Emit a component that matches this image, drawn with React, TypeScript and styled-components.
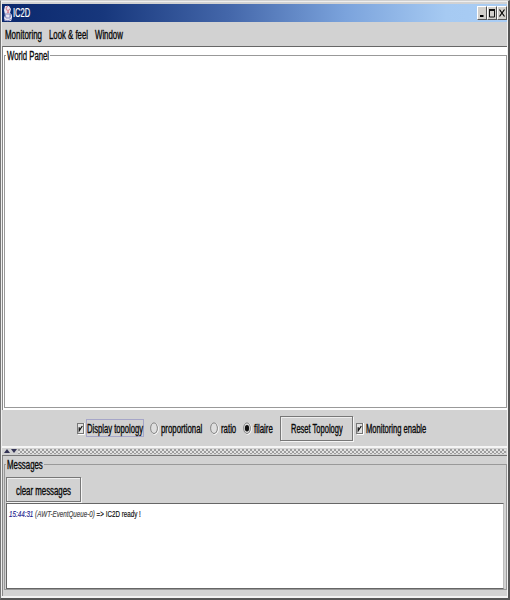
import React, { useLayoutEffect, useRef, useState } from "react";
import styled, { createGlobalStyle } from "styled-components";

const Global = createGlobalStyle`
  * { box-sizing: border-box; }
  body { margin: 0; background: #d2d2d2; font-family: "Liberation Sans", Arial, sans-serif; }
`;

const Frame = styled.div`
  width: 510px;
  height: 600px;
  display: flex;
  flex-direction: column;
  background: #d2d2d2;
  border-style: solid;
  border-width: 1px 2px 2px 1px;
  border-color: #d0d0d0 #555 #555 #777;
  box-shadow: inset 1px 1px 0 #eee, inset -1px -2px 0 #f2f2f2;
  padding: 3px 1px 2px 1px;
  color: #080808;
`;

const TitleBar = styled.header`
  height: 18px;
  flex: none;
  display: flex;
  align-items: center;
  padding: 0 0 0 1px;
  background: linear-gradient(90deg, #0b286d 0%, #17377c 20%, #4467aa 45%, #7ba3dc 68%, #a6caf2 88%, #a9cdf5 100%);
  color: #fff;
`;
const WindowButtons = styled.div`
  display: flex;
  margin-left: auto;
`;
const WindowButton = styled.button`
  width: 10px;
  height: 14px;
  padding: 0;
  border: 1px solid;
  border-color: #fff #555 #555 #fff;
  background: #d2d0cc;
  display: flex;
  svg { display: block; }
`;
const MenuBar = styled.nav`
  height: 24px;
  flex: none;
  display: flex;
  align-items: center;
  gap: 7px;
  padding: 1px 0 0 3px;
`;
const World = styled.section`
  height: 364px;
  flex: none;
  background: #fff;
  border-top: 1px solid #666;
  border-left: 1px solid #888;
  padding: 0 0 2px 1px;
`;
const Titled = styled.fieldset<{ $h: number }>`
  height: ${(p) => p.$h}px;
  min-width: 0;
  margin: 0;
  padding: 0;
  border: 1px solid #999;
  legend {
    display: flex;
    height: 17px;
    align-items: center;
    margin: 0 0 0 1px;
    padding: 0 1px;
  }
`;
const Controls = styled.div`
  height: 36px;
  flex: none;
  display: flex;
  align-items: center;
  padding-left: 75px;
`;
const Option = styled.label<{ $gap: number; $lead?: number }>`
  display: flex;
  align-items: center;
  height: 18px;
  margin-left: ${(p) => p.$lead ?? 0}px;
  margin-right: ${(p) => p.$gap}px;
`;
const Caption = styled.span<{ $focus?: boolean }>`
  display: flex;
  align-items: center;
  height: 18px;
  margin-left: 1px;
  padding-top: 1px;
  border: 1px solid ${(p) => (p.$focus ? "#a6a6c8" : "transparent")};
`;
const Button = styled.button<{ $w: number }>`
  width: ${(p) => p.$w}px;
  height: 25px;
  flex: none;
  display: flex;
  align-items: center;
  justify-content: center;
  padding: 2px 0 0;
  color: #080808;
  background: #d2d2d2;
  border: 1px solid #777;
  box-shadow: inset 1px 1px 0 #eee, 1px 1px 0 #f5f5f5;
`;
const Splitter = styled.div`
  height: 10px;
  flex: none;
  display: flex;
  align-items: center;
  border-top: 2px solid #f5f5f5;
  border-bottom: 1px solid #777;
  padding: 0 1px;
`;
const Grip = styled.div`
  flex: 1;
  height: 5px;
  background:
    radial-gradient(circle at 1px 1px, #999 0 0.7px, transparent 0.8px) 0 0 / 4px 4px,
    radial-gradient(circle at 3px 3px, #999 0 0.7px, transparent 0.8px) 0 0 / 4px 4px,
    #e2e2e2;
`;
const MessagesPanel = styled.section`
  flex: 1;
  min-height: 0;
  border-left: 1px solid #888;
  padding: 0 0 0 1px;
`;
const MessageTools = styled.div`
  height: 30px;
  padding: 4px 0 0 1px;
`;
const Log = styled.div`
  height: 86px;
  margin: 0 2px 0 1px;
  background: #fff;
  border: 1px solid #666;
  border-right-color: #bbb;
  display: flex;
  align-items: flex-start;
  padding: 5px 2px;
`;

const TextBox = styled.span<{ $w: number; $size: number; $stroke: number }>`
  display: block;
  flex: none;
  width: ${(p) => p.$w}px;
  height: ${(p) => p.$size + 2}px;
  line-height: ${(p) => p.$size + 2}px;
  font-size: ${(p) => p.$size}px;
  -webkit-text-stroke: ${(p) => p.$stroke}px currentColor;
`;
const TextRun = styled.span`
  display: inline-block;
  white-space: pre;
  transform-origin: 0 50%;
`;
const Stamp = styled.span`
  color: #22228e;
  font-style: italic;
`;
const Source = styled.i`
  color: #444;
`;

/** Text condensed horizontally to fill the given width. */
function Fit({ w, size = 12, stroke = 0.35, children }: { w: number; size?: number; stroke?: number; children: React.ReactNode }) {
  const ref = useRef<HTMLSpanElement>(null);
  const [scale, setScale] = useState(1);
  useLayoutEffect(() => {
    if (ref.current) setScale(w / ref.current.offsetWidth);
  }, [w]);
  return (
    <TextBox $w={w} $size={size} $stroke={stroke}>
      <TextRun ref={ref} style={{ transform: `scaleX(${scale})` }}>{children}</TextRun>
    </TextBox>
  );
}

const JavaIcon = () => (
  <svg width="10" height="17" viewBox="0 0 10 17">
    <path d="M2 1h4l2 3-1 4 2 2v3l-1 3H2L1 13l1-3-1-5z" fill="#e9e4f0" />
    <path d="M5 1Q2 3 4 5T4 8M7 4Q4 6 6 8" fill="none" stroke="#d58a9b" strokeWidth="1.2" />
    <path d="M2 9h5v4H3zM7 9q2 1 0 3M1 15q4 2 8-1" fill="none" stroke="#858bc0" />
  </svg>
);
const Check = () => (
  <svg width="8" height="13" viewBox="0 0 8 13">
    <path d="M1 12.5h6.5V1" fill="none" stroke="#fff" />
    <rect x=".5" y="1.5" width="6" height="10" fill="#e2e2e2" stroke="#777" />
    <path d="M2.2 5.2v3.6L5.3 4" fill="none" stroke="#111" strokeWidth="1.2" />
  </svg>
);
const Radio = ({ on }: { on?: boolean }) => (
  <svg width="9" height="13" viewBox="0 0 9 13">
    <ellipse cx="4.7" cy="6.8" rx="3.6" ry="5.5" fill="none" stroke="#fff" />
    <ellipse cx="4" cy="6.2" rx="3.4" ry="5.3" fill="#dedede" stroke="#777" strokeWidth=".9" />
    {on && <ellipse cx="4" cy="6.2" rx="2.1" ry="3.2" fill="#111" />}
  </svg>
);

export default function App() {
  return (
    <>
      <Global />
      <Frame>
        <TitleBar>
          <JavaIcon />
          <Fit w={17} stroke={0.2}>IC2D</Fit>
          <WindowButtons>
            <WindowButton aria-label="Minimize"><svg width="8" height="12"><path d="M2 9h3.5" stroke="#000" strokeWidth="2" /></svg></WindowButton>
            <WindowButton aria-label="Maximize"><svg width="8" height="12"><path d="M1.5 2v8h5V2M1 2.5h6" fill="none" stroke="#111" /><path d="M1 3h6" stroke="#111" strokeWidth="2" /></svg></WindowButton>
            <WindowButton aria-label="Close"><svg width="8" height="12"><path d="M1.5 2.5l5 7M6.5 2.5l-5 7" stroke="#000" strokeWidth="1.2" /></svg></WindowButton>
          </WindowButtons>
        </TitleBar>
        <MenuBar>
          <Fit w={37}>Monitoring</Fit>
          <Fit w={39}>Look &amp; feel</Fit>
          <Fit w={28}>Window</Fit>
        </MenuBar>
        <World>
          <Titled $h={361}>
            <legend><Fit w={42}>World Panel</Fit></legend>
          </Titled>
        </World>
        <Controls>
          <Option $gap={6}><Check /><Caption $focus><Fit w={56}>Display topology</Fit></Caption></Option>
          <Option $gap={7}><Radio /><Caption><Fit w={41}>proportional</Fit></Caption></Option>
          <Option $gap={6}><Radio /><Caption><Fit w={15}>ratio</Fit></Caption></Option>
          <Option $gap={6}><Radio on /><Caption><Fit w={19}>filaire</Fit></Caption></Option>
          <Button $w={73}><Fit w={52}>Reset Topology</Fit></Button>
          <Option $gap={0} $lead={3}><Check /><Caption><Fit w={60}>Monitoring enable</Fit></Caption></Option>
        </Controls>
        <Splitter>
          <svg width="15" height="7"><path d="M1 5l3-4 3 4zM8 1h6l-3 4z" fill="#333355" /></svg>
          <Grip />
        </Splitter>
        <MessagesPanel>
          <Titled $h={134}>
            <legend><Fit w={36}>Messages</Fit></legend>
            <MessageTools><Button $w={75}><Fit w={55}>clear messages</Fit></Button></MessageTools>
            <Log>
              <Fit w={132} size={9} stroke={0.15}>
                <Stamp>15:44:31</Stamp> <Source>(AWT-EventQueue-0)</Source> =&gt; IC2D ready !
              </Fit>
            </Log>
          </Titled>
        </MessagesPanel>
      </Frame>
    </>
  );
}
